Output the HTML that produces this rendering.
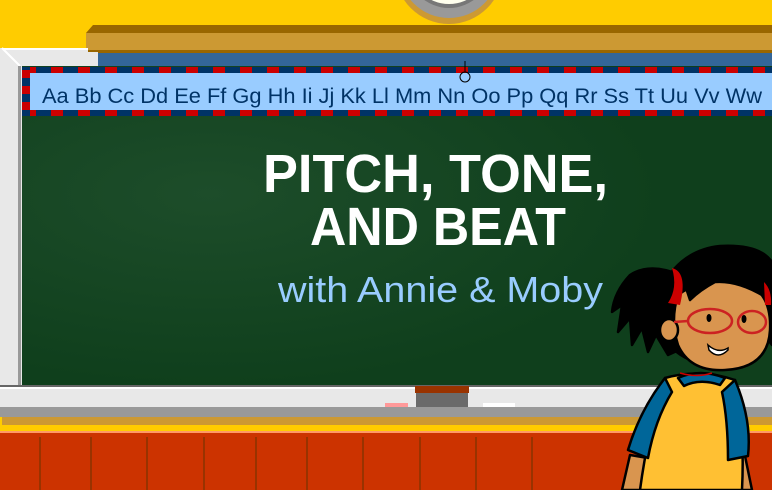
<!DOCTYPE html>
<html><head><meta charset="utf-8"><style>
html,body{margin:0;padding:0;width:772px;height:490px;overflow:hidden;background:#FFCC00}
svg{display:block}
</style></head><body>
<svg width="772" height="490" viewBox="0 0 772 490" xmlns="http://www.w3.org/2000/svg">
<defs>
<radialGradient id="g1" cx="0.25" cy="0.4" r="0.6"><stop offset="0" stop-color="#1d4d2a"/><stop offset="1" stop-color="#0F3F1C"/></radialGradient>
<pattern id="chk" x="24" y="0" width="27" height="49" patternUnits="userSpaceOnUse"><rect width="27" height="49" fill="#003366"/><rect x="0" width="12" height="49" fill="#CC0000"/></pattern>
<pattern id="chkv" x="0" y="70" width="8" height="16" patternUnits="userSpaceOnUse"><rect width="8" height="16" fill="#003366"/><rect y="0" width="8" height="8" fill="#CC0000"/></pattern>
</defs>
<rect width="772" height="490" fill="#FFCC00"/>
<!-- clock -->
<circle cx="449" cy="-30" r="54" fill="#CC9933"/>
<circle cx="449" cy="-32" r="50" fill="#999"/>
<circle cx="449" cy="-34" r="42" fill="#777"/>
<circle cx="449" cy="-36" r="40" fill="#FFFFEE"/>
<!-- shelf -->
<polygon points="93,25 772,25 772,33 86,33" fill="#996600"/>
<rect x="86" y="33" width="686" height="18" fill="#CC9933"/>
<rect x="86" y="50" width="686" height="3" fill="#996600"/>
<rect x="98" y="53" width="674" height="14" fill="#336699"/>
<!-- frame -->
<polygon points="0,48 88,48 88,52 98,52 98,66 22,66 22,385 0,385" fill="#E8E8E8"/>
<polygon points="2,48 88,48 88,50 4,50" fill="#fff"/>
<line x1="2" y1="48" x2="20" y2="66" stroke="#fff" stroke-width="2"/>
<rect x="18" y="66" width="3" height="320" fill="#999"/>
<!-- board -->
<rect x="22" y="66" width="750" height="320" fill="url(#g1)"/>
<!-- alphabet strip -->
<rect x="22" y="67" width="750" height="49" fill="#003366"/>
<rect x="22" y="67" width="750" height="6" fill="url(#chk)"/>
<rect x="22" y="110" width="750" height="6" fill="url(#chk)"/>
<rect x="22" y="67" width="8" height="49" fill="url(#chkv)"/>
<rect x="30" y="73" width="742" height="37" fill="#99CCFF"/>
<text x="42" y="103" textLength="720" lengthAdjust="spacingAndGlyphs" font-family="Liberation Sans, sans-serif" font-size="21" fill="#003366">Aa Bb Cc Dd Ee Ff Gg Hh Ii Jj Kk Ll Mm Nn Oo Pp Qq Rr Ss Tt Uu Vv Ww</text>
<line x1="465" y1="61" x2="465" y2="72" stroke="#000" stroke-width="1"/>
<circle cx="465" cy="77" r="5" fill="none" stroke="#000" stroke-width="1"/>
<!-- title -->
<text x="263" y="192" textLength="345" lengthAdjust="spacingAndGlyphs" font-family="Liberation Sans, sans-serif" font-weight="bold" font-size="54" fill="#fff">PITCH, TONE,</text>
<text x="310" y="245" textLength="256" lengthAdjust="spacingAndGlyphs" font-family="Liberation Sans, sans-serif" font-weight="bold" font-size="54" fill="#fff">AND BEAT</text>
<text x="278" y="302" textLength="325" lengthAdjust="spacingAndGlyphs" font-family="Liberation Sans, sans-serif" font-size="36" fill="#99CCFF">with Annie &amp; Moby</text>
<!-- tray -->
<rect x="0" y="385" width="772" height="2" fill="#666"/>
<rect x="0" y="387" width="772" height="20" fill="#E8E8E8"/>
<rect x="0" y="387" width="772" height="2" fill="#fff"/>
<rect x="415" y="386" width="54" height="7" fill="#993300"/>
<rect x="416" y="393" width="52" height="14" fill="#6a6a6a"/>
<rect x="385" y="403" width="23" height="4" fill="#FF9999"/>
<rect x="483" y="403" width="32" height="4" fill="#fff"/>
<rect x="0" y="407" width="772" height="10" fill="#999"/>
<rect x="2" y="417" width="770" height="8" fill="#CC9933"/>
<rect x="0" y="425" width="772" height="6" fill="#FFCC00"/>
<rect x="0" y="431" width="772" height="2" fill="#FF9966"/>
<rect x="0" y="433" width="772" height="57" fill="#CC3300"/>
<g stroke="#993300" stroke-width="2">
<line x1="40" y1="437" x2="40" y2="490"/><line x1="91" y1="437" x2="91" y2="490"/><line x1="147" y1="437" x2="147" y2="490"/><line x1="204" y1="437" x2="204" y2="490"/><line x1="256" y1="437" x2="256" y2="490"/><line x1="307" y1="437" x2="307" y2="490"/><line x1="363" y1="437" x2="363" y2="490"/><line x1="420" y1="437" x2="420" y2="490"/><line x1="476" y1="437" x2="476" y2="490"/><line x1="532" y1="437" x2="532" y2="490"/><line x1="744" y1="437" x2="744" y2="490"/>
</g>
<!-- girl -->
<g stroke="#000" stroke-width="2.5" stroke-linejoin="round">
<path d="M630 455 L622 490 L650 490 L648 458Z" fill="#D9954F"/>
<path d="M725 460 L735 490 L752 490 L745 456Z" fill="#D9954F"/>
<path d="M665 378 Q700 368 735 380 Q745 430 742 490 L640 490 Q648 430 665 378Z" fill="#FFC033"/>
<path d="M665 378 Q640 410 628 450 L648 458 Q655 420 672 392Z" fill="#006699"/>
<path d="M735 380 Q752 420 748 456 L728 460 Q728 420 722 392Z" fill="#006699"/>
<path d="M678 378 Q700 368 725 378 L720 385 Q700 378 684 386Z" fill="#006699"/>
<path d="M680 275 Q650 262 630 275 Q614 292 612 312 L622 305 L618 332 L630 318 L632 345 L642 328 L648 352 L656 335 L668 355 L690 345 Z" fill="#000"/>
<path d="M660 290 Q680 250 720 246 Q760 244 772 262 L772 345 Q760 330 750 310 L700 300 L690 360 Q668 350 660 330Z" fill="#000"/>
<path d="M678 295 Q705 275 740 280 Q772 290 770 330 Q768 368 725 370 Q690 372 678 345 Q670 320 678 295Z" fill="#D9954F"/>
<ellipse cx="669" cy="330" rx="9" ry="11" fill="#D9954F"/>
<path d="M685 285 Q720 262 765 280 L770 300 Q740 280 715 282 Q700 290 690 300Z" fill="#000"/>
</g>
<path d="M672 268 Q688 272 680 305 L668 303 Q678 288 672 268Z" fill="#CC0000"/>
<path d="M764 282 Q772 290 771 305 L765 305Z" fill="#CC0000"/>
<g fill="none" stroke="#CC2222" stroke-width="2.5">
<ellipse cx="710" cy="321" rx="22" ry="12"/>
<ellipse cx="752" cy="322" rx="14" ry="11"/>
<line x1="674" y1="322" x2="688" y2="321"/>
</g>
<ellipse cx="709" cy="318" rx="2.5" ry="4" fill="#000"/>
<ellipse cx="744" cy="319" rx="2.5" ry="4" fill="#000"/>
<path d="M708 345 Q718 354 728 348 L728 350 Q718 360 709 350Z" fill="#fff" stroke="#000" stroke-width="1.5"/>
<path d="M680 373 Q697 378 712 373" fill="none" stroke="#CC0000" stroke-width="1.5"/>
</svg>
</body></html>
